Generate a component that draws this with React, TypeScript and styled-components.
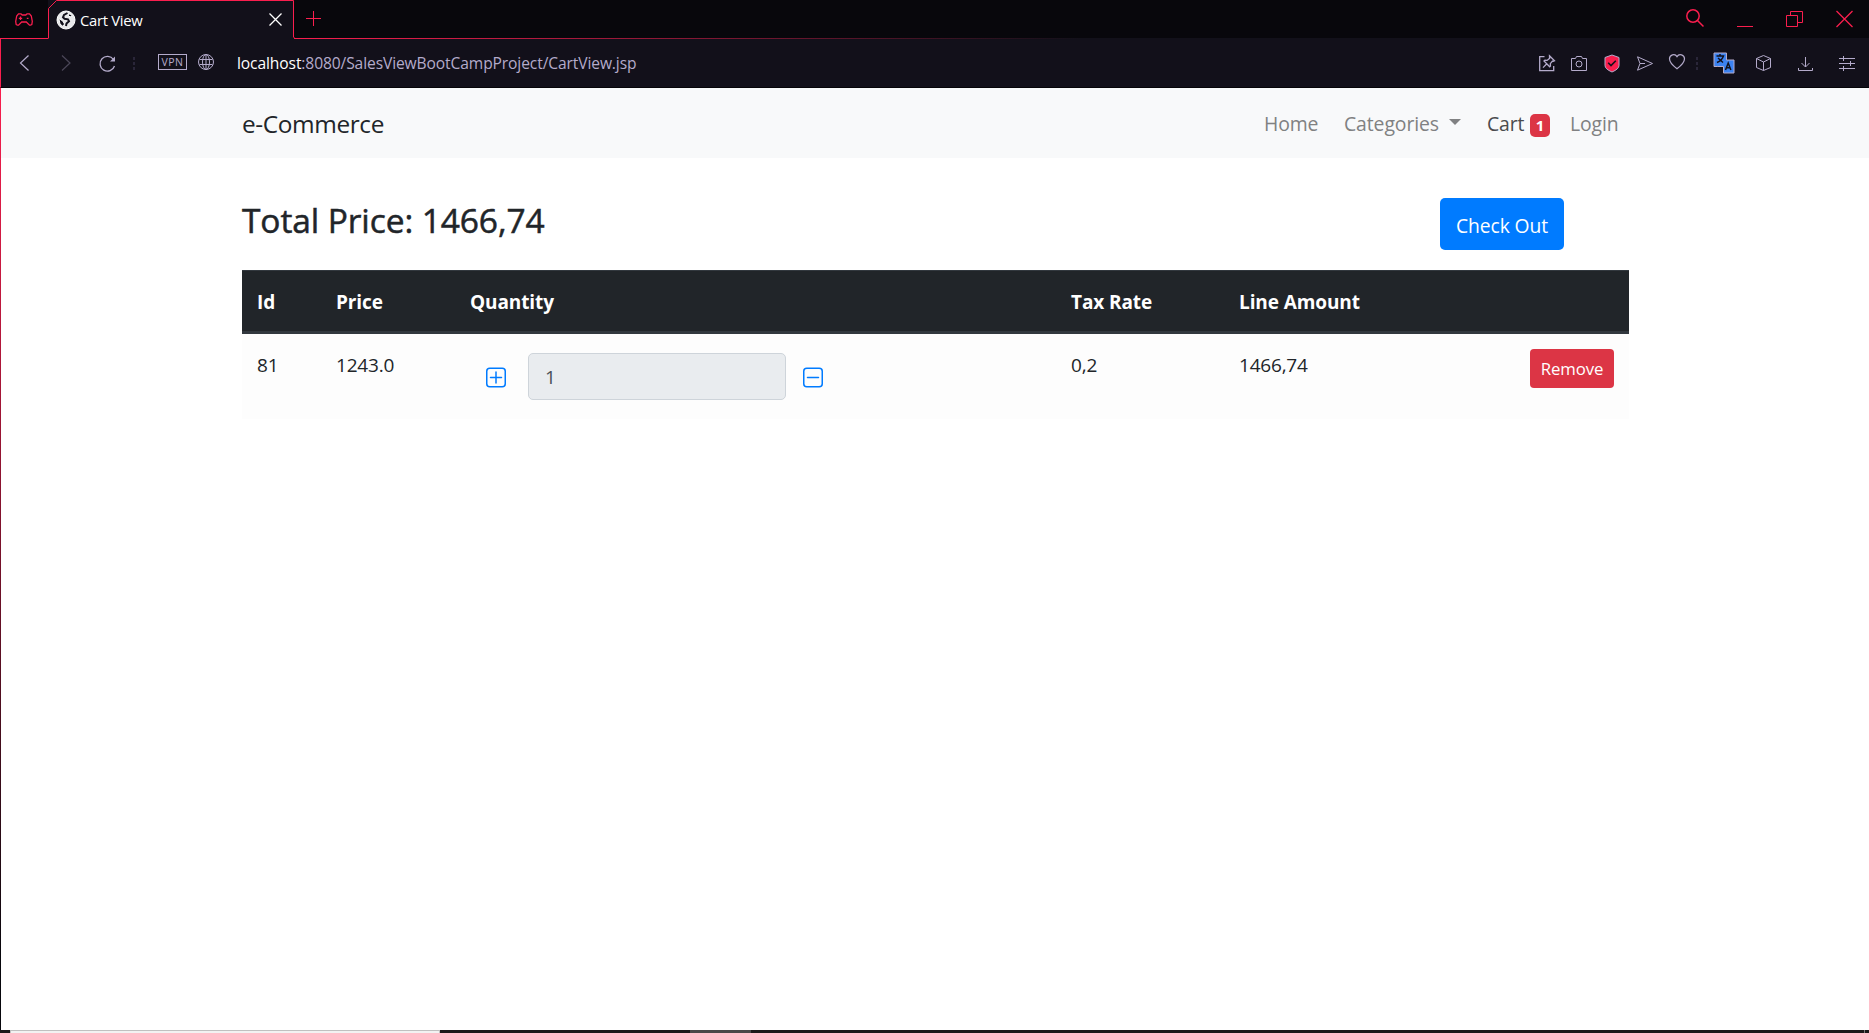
import React from 'react';
import styled, { createGlobalStyle } from 'styled-components';

const red = '#fa1e4e';

const GlobalStyle = createGlobalStyle`
  * { box-sizing: border-box; }
  html, body, #root { margin: 0; height: 100%; }
  body { overflow: hidden; background: #fff; font-family: "Open Sans", "Noto Sans", sans-serif; color: #212529; }
`;

const Window = styled.div`
  display: flex;
  flex-direction: column;
  height: 1033px;
  width: 1869px;
`;

const Text = styled.span<{ $w: number }>`
  display: inline-block;
  width: ${p => p.$w}px;
  white-space: nowrap;
`;

const Icon = styled.svg`
  display: block;
  flex: none;
  fill: none;
  stroke: currentColor;
  overflow: visible;
`;

const TabBar = styled.div`
  display: flex;
  height: 39px;
  background: #08070c;
  color: ${red};
`;
const TabCorner = styled.div`
  width: 48px;
  border-bottom: 1px solid ${red};
  padding: 13px 0 0 15px;
`;
const Tab = styled.div`
  position: relative;
  width: 246px;
  height: 39px;
  display: flex;
  align-items: center;
  background: #12101a;
  color: #fff;
  font-size: 14.8px;
  padding: 0 12px 0 9px;
  gap: 5px;
`;
const TabOutline = styled.svg`
  position: absolute;
  left: 0;
  top: 0;
`;
const TabTitle = styled.span`
  flex: 1;
  letter-spacing: -0.28px;
  line-height: 38px;
`;
const TabRest = styled.div`
  flex: 1;
  display: flex;
  padding: 0 16px 0 12px;
  border-bottom: 1px solid transparent;
  border-image: linear-gradient(90deg, ${red}, #12101a 50%) 1;
`;
const WindowButtons = styled.div`
  display: flex;
  margin-left: auto;
  padding-top: 9px;
  gap: 33px;
`;

const AddressBar = styled.div`
  display: flex;
  align-items: center;
  height: 49px;
  background: #12101a;
  border-bottom: 1px solid #050408;
  border-left: 1px solid ${red};
  color: #b4abcb;
  padding: 0 14px 0 18px;
`;
const Slot = styled.div<{ $ml?: number; $dim?: boolean; $up?: number }>`
  margin-left: ${p => p.$ml ?? 0}px;
  margin-bottom: ${p => p.$up ?? 0}px;
  opacity: ${p => (p.$dim ? 0.35 : 1)};
`;
const Dots = styled.div<{ $ml: number }>`
  width: 2px;
  height: 13px;
  margin-left: ${p => p.$ml}px;
  background: repeating-linear-gradient(#2a2639 0 3px, transparent 3px 5px);
`;
const Vpn = styled.div`
  width: 29px;
  height: 16px;
  margin: 0 0 2px 23px;
  border: 1px solid #b4abcb;
  font-size: 10.5px;
  line-height: 14px;
  text-align: center;
  letter-spacing: 0.5px;
`;
const Url = styled.div`
  margin-left: 23px;
  font-size: 15.6px;
  letter-spacing: -0.11px;
  line-height: 48px;
  white-space: nowrap;
  b { color: #fff; font-weight: 400; }
`;
const Tools = styled.div`
  display: flex;
  align-items: center;
  margin-left: auto;
`;

const Page = styled.main`
  flex: 1;
  border-left: 1px solid transparent;
  border-image: linear-gradient(${red}, #08070c 92%) 1;
`;
const Navbar = styled.nav`
  display: flex;
  justify-content: space-between;
  height: 70px;
  background: #f8f9fa;
  padding: 0 249px 0 241px;
`;
const Brand = styled.a`
  font-size: 24.4px;
  letter-spacing: -0.38px;
  line-height: 72px;
`;
const NavLinks = styled.div`
  display: flex;
  font-size: 19.4px;
  letter-spacing: -0.1px;
  line-height: 74px;
  color: #808182;
`;
const NavLink = styled.a<{ $ml?: number; $active?: boolean }>`
  display: flex;
  height: 72px;
  align-items: center;
  margin-left: ${p => p.$ml ?? 0}px;
  color: ${p => (p.$active ? '#4a4b4d' : '#808182')};
`;
const Caret = styled.i`
  border: 6px solid transparent;
  border-top-color: #808182;
  border-bottom: 0;
  margin: 0 0 5px 10px;
`;
const Badge = styled.span`
  width: 20px;
  height: 23px;
  margin: 2px 0 0 5px;
  border-radius: 5px;
  background: #dc3545;
  color: #fff;
  font-size: 15px;
  font-weight: 700;
  line-height: 23px;
  text-align: center;
`;

const Container = styled.div`
  width: 1387px;
  margin-left: 241px;
`;
const Summary = styled.header`
  display: flex;
  justify-content: space-between;
  align-items: flex-start;
  height: 112px;
  padding: 40px 65px 0 0;
`;
const Total = styled.h1`
  margin: 0;
  font-size: 33.5px;
  font-weight: 500;
  letter-spacing: -0.1px;
  line-height: 45px;
  -webkit-text-stroke: 0.5px #212529;
`;
const Button = styled.button<{ $danger?: boolean }>`
  display: block;
  width: ${p => (p.$danger ? 84 : 124)}px;
  height: ${p => (p.$danger ? 39 : 52)}px;
  margin-left: ${p => (p.$danger ? 1 : 0)}px;
  padding: ${p => (p.$danger ? 0 : 2)}px 0 0;
  border: 0;
  border-radius: ${p => (p.$danger ? 4 : 5)}px;
  background: ${p => (p.$danger ? '#dc3545' : '#007bff')};
  color: #fff;
  font-family: inherit;
  font-size: ${p => (p.$danger ? 16.8 : 19.3)}px;
  letter-spacing: -0.1px;
  white-space: nowrap;
`;

const Table = styled.table`
  width: 100%;
  table-layout: fixed;
  border-collapse: separate;
  border-spacing: 0;
  font-size: 19px;
`;
const Th = styled.th`
  height: 64px;
  padding: 1px 15px 0;
  background: #212529;
  border-top: 1px solid #32383e;
  border-bottom: 3px solid #32383e;
  color: #fff;
  font-weight: 700;
  letter-spacing: -0.1px;
  text-align: left;
`;
const Td = styled.td`
  height: 85px;
  padding: 15px 15px 0;
  background: #fdfdfd;
  letter-spacing: -0.2px;
  line-height: 33px;
  vertical-align: top;
  text-align: left;
`;
const Quantity = styled.div`
  display: flex;
  align-items: center;
  padding: 4px 0 0 16px;
  color: #007bff;
`;
const QuantityInput = styled.input`
  width: 258px;
  height: 47px;
  margin: 0 17px 0 22px;
  padding: 0 16px;
  border: 1px solid #ced4da;
  border-radius: 5px;
  background: #e9ecef;
  color: #495057;
  font: inherit;
`;
const Taskbar = styled.footer`
  display: flex;
  height: 3px;
  background: #1b1919;
`;
const TaskSearch = styled.div`
  width: 281px;
  width: 430px;
  margin-left: 10px;
  background: #f2f2f2;
  border: 1px solid #c0c0c0;
  border-bottom: 0;
`;
const TaskActive = styled.div`
  width: 61px;
  margin-left: 250px;
  background: #4a4848;
`;
const ShowDesktop = styled.div`
  width: 1px;
  margin: 0 4px 0 auto;
  background: #777;
`;

const QtyIcon = ({ plus }: { plus?: boolean }) => (
  <Icon width="20" height="20" viewBox="0 0 20 20" strokeWidth="1.500">
    <rect x=".75" y="1.250" width="18.500" height="18.500" rx="3" />
    <path d={plus ? 'M4.500 10.500h11M10 5v11' : 'M4.500 10.500h11'} strokeLinecap="round" />
  </Icon>
);

export default function App() {
  return (
    <Window>
      <GlobalStyle />
      <TabBar>
        <TabCorner>
          <Icon width="18" height="13" viewBox="0 0 18 13" strokeWidth="1.300">
            <path d="M3.500.8H6l1.200 1.200h3.600L12 .8h2.500L16.300 3l1 5.500-.5 3-1.300.7h-1L11.300 9H6.700l-3.200 3.200h-1l-1.300-.7-.5-3 1-5.500zM3.800 5.300h3.400M5.500 3.600V7M11.800 5.300h1.700" />
          </Icon>
        </TabCorner>
        <Tab>
          <TabOutline width="247" height="39" fill="none" stroke={red}>
            <path d="M.5 38.500V8.500L8.500.5H245.500V37L247 38.500" />
          </TabOutline>
          <Icon width="18" height="18" viewBox="0 0 18 18" stroke="none">
            <circle cx="9" cy="9" r="9" fill="#e8e8ea" />
            <path d="M10.500 2 7 4 6 6.300l1.500 1.500 3.500.5 1 2-2.500 2.200-.5 2.500" fill="none" stroke="#12101a" strokeWidth="2" />
            <path d="m1.800 7.500 4 2.500 1.700 3-1.500 2.500-3-2.500zM12.500 2.500l2.800 2.300L13 6l-1.500-1.500z" fill="#12101a" />
          </Icon>
          <TabTitle>Cart View</TabTitle>
          <Icon width="13" height="13" strokeWidth="1.300"><path d="m.5.5 12 12m0-12-12 12" /></Icon>
        </Tab>
        <TabRest>
          <Icon width="15" height="39"><path d="M0 18.500h15M7.500 11v15" /></Icon>
          <WindowButtons>
            <Icon width="18" height="18" strokeWidth="1.500"><circle cx="7" cy="7" r="6.200" /><path d="m11.500 11.500 6 6" /></Icon>
            <Icon width="16" height="20"><path d="M0 17.500h16" /></Icon>
            <Icon width="17" height="20"><path d="M.5 6.500h11v11H.5zM4.500 6.500v-4h12v11h-5" /></Icon>
            <Icon width="17" height="20" strokeWidth="1.300"><path d="m.5 2 16 16m0-16-16 16" /></Icon>
          </WindowButtons>
        </TabRest>
      </TabBar>
      <AddressBar>
        <Slot><Icon width="10" height="16" strokeWidth="1.200"><path d="M9.500.5 1.500 8l8 7.500" /></Icon></Slot>
        <Slot $ml={32} $dim><Icon width="10" height="16" strokeWidth="1.200"><path d="m1 .5 8 7.500-8 7.500" /></Icon></Slot>
        <Slot $ml={28}><Icon width="17" height="17" strokeWidth="1.300"><path d="M14.500 4.500A7.400 7.400 0 1 0 15.500 11" /><path d="m16 1.500v5h-5z" fill="currentColor" stroke="none" /></Icon></Slot>
        <Dots $ml={17} />
        <Vpn>VPN</Vpn>
        <Slot $ml={11} $up={2}>
          <Icon width="16" height="16"><circle cx="8" cy="8" r="7.500" /><ellipse cx="8" cy="8" rx="3.500" ry="7.500" /><path d="M1.500 5.500h13M1.500 10.500h13M8 .5v15" /></Icon>
        </Slot>
        <Url><b>localhost</b>:8080/SalesViewBootCampProject/CartView.jsp</Url>
        <Tools>
          <Icon width="17" height="17" strokeWidth="1.300"><path d="M5.500 1.700H.7v14h14V11M.7 15.700" /><path d="m10.500.7 5 5-1.300.6-.7-.2-2.200 2.600.2 2.300-.8.800L5 6l.9-.8 2.200.2 2.600-2.200-.2-1zM7.800 8.800 4 12.600" /></Icon>
          <Slot $ml={15}><Icon width="16" height="15"><path d="M.5 2.500h4l1-2h5l1 2h4v12H.5z" /><circle cx="8" cy="8" r="3" /></Icon></Slot>
          <Slot $ml={18}><Icon width="14" height="17" stroke="none"><path d="m7 0 7 2.500v8q0 3.500-7 6.500-7-3-7-6.500v-8z" fill={red} /><path d="m3.200 7.700 2.800 2.800 4.800-4.800" stroke="#12101a" strokeWidth="1.600" fill="none" /></Icon></Slot>
          <Slot $ml={18}><Icon width="16" height="15"><path d="m.5.8 15 6.700-15 6.700L3 7.500z" /><path d="M3 7.500h5" /></Icon></Slot>
          <Slot $ml={16} $up={3}><Icon width="16" height="15" strokeWidth="1.200"><path d="M8 14.700C5 12.500.5 9 .5 4.800.5 1 5.800-1 8 2.600 10.200-1 15.500 1 15.500 4.800 15.500 9 11 12.500 8 14.700z" /></Icon></Slot>
          <Dots $ml={11} />
          <Slot $ml={16}>
            <Icon width="20" height="20" stroke="none"><path d="M0 0h12.500v7H20v13H9.500v-6.500H0z" fill="#3b82f1" /><path d="M2.500 3H9.500Q8 7.500 3 9.500M4 5l5 4.500M6 1v2M3 14l1.500 2.500 4 1M6 15l2.500 2.500" stroke="#12101a" strokeWidth="1.400" fill="none" /><path d="m11.500 17 2.700-7 2.700 7m-4.400-2.300h3.400" fill="none" stroke="#12101a" strokeWidth="1.500" /></Icon>
          </Slot>
          <Slot $ml={22}><Icon width="15" height="16"><path d="m7.500.5 7 3v9l-7 3-7-3v-9zM.5 3.500l7 3.500 7-3.500M7.500 7v8.500" /></Icon></Slot>
          <Slot $ml={27}><Icon width="15" height="15"><path d="M7.500 1v10M3.500 7l4 4 4-4M.5 12v2.500h14V12" /></Icon></Slot>
          <Slot $ml={26}><Icon width="16" height="14"><path d="M0 2.500h16M0 7.500h16M0 12.500h16M4.500 0v5M11.500 5v5M4.500 10v5" /></Icon></Slot>
        </Tools>
      </AddressBar>
      <Page>
        <Navbar>
          <Brand><Text $w={143}>e-Commerce</Text></Brand>
          <NavLinks>
            <NavLink><Text $w={54}>Home</Text></NavLink>
            <NavLink $ml={26}><Text $w={95}>Categories</Text><Caret /></NavLink>
            <NavLink $ml={26} $active><Text $w={38}>Cart</Text><Badge>1</Badge></NavLink>
            <NavLink $ml={20}><Text $w={50}>Login</Text></NavLink>
          </NavLinks>
        </Navbar>
        <Container>
          <Summary>
            <Total>Total Price: 1466,74</Total>
            <Button>Check Out</Button>
          </Summary>
          <Table>
            <colgroup>
              <col width="79" /><col width="134" /><col width="601" /><col width="168" /><col width="290" /><col width="115" />
            </colgroup>
            <thead>
              <tr><Th>Id</Th><Th>Price</Th><Th>Quantity</Th><Th>Tax Rate</Th><Th>Line Amount</Th><Th /></tr>
            </thead>
            <tbody>
              <tr>
                <Td>81</Td>
                <Td>1243.0</Td>
                <Td><Quantity><QtyIcon plus /><QuantityInput value="1" readOnly /><QtyIcon /></Quantity></Td>
                <Td>0,2</Td>
                <Td>1466,74</Td>
                <Td><Button $danger>Remove</Button></Td>
              </tr>
            </tbody>
          </Table>
        </Container>
      </Page>
      <Taskbar><TaskSearch /><TaskActive /><ShowDesktop /></Taskbar>
    </Window>
  );
}
